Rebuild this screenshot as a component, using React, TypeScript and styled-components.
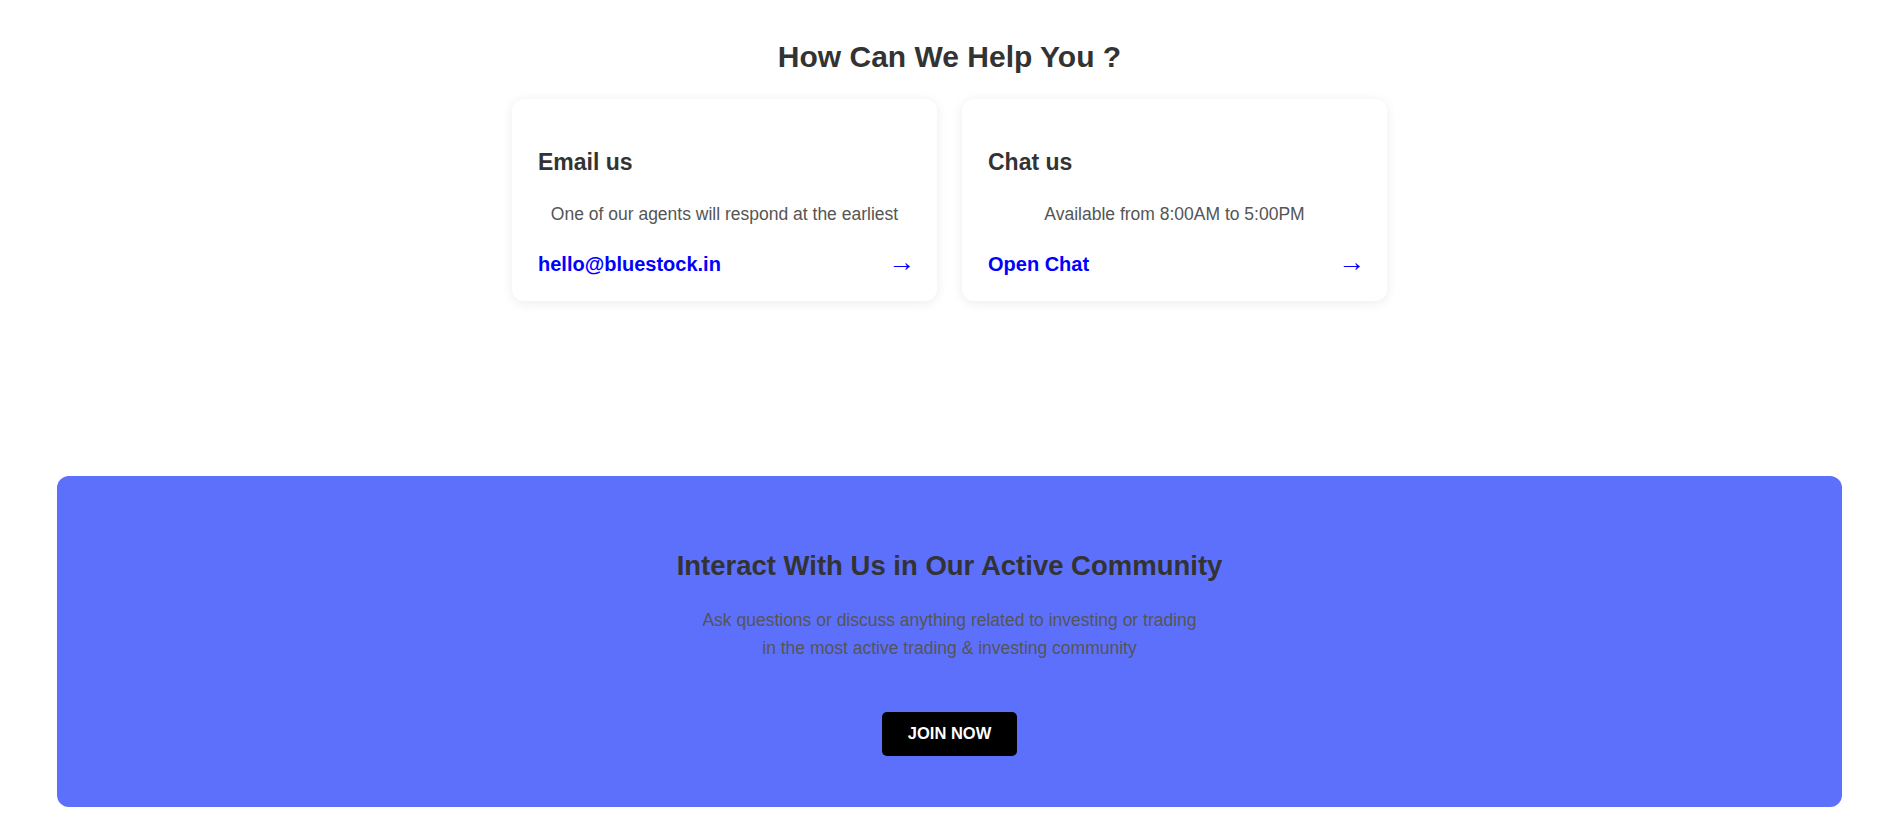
import React from "react";
import styled, { createGlobalStyle } from "styled-components";

const GlobalStyle = createGlobalStyle`
  * { box-sizing: border-box; }
  html, body {
    margin: 0;
    padding: 0;
    background: #ffffff;
    font-family: "Liberation Sans", Arial, sans-serif;
  }
`;

const Page = styled.div`
  display: flex;
  flex-direction: column;
  align-items: center;
  padding: 40px 52px 14px 57px;
`;

const HelpSection = styled.section`
  display: flex;
  flex-direction: column;
  align-items: center;
  width: 100%;
`;

const Heading = styled.h2`
  margin: 0;
  font-size: 30px;
  line-height: 34px;
  font-weight: 700;
  color: #333333;
`;

const CardRow = styled.div`
  display: flex;
  gap: 25px;
  margin-top: 25px;
`;

const Card = styled.div`
  width: 425px;
  height: 202px;
  background: #ffffff;
  border-radius: 12px;
  box-shadow: 0 2px 12px rgba(0, 0, 0, 0.08);
  padding: 50px 26px 0 26px;
  display: flex;
  flex-direction: column;
`;

const CardTitle = styled.h3`
  margin: 0;
  font-size: 23px;
  line-height: 26.5px;
  font-weight: 700;
  color: #333333;
`;

const CardText = styled.p`
  margin: 28.5px 0 0 0;
  font-size: 17.5px;
  line-height: 20px;
  color: #555555;
  text-align: center;
`;

const LinkRow = styled.div`
  margin-top: 29px;
  display: flex;
  align-items: center;
  justify-content: space-between;
  height: 23px;
`;

const CardLink = styled.a`
  font-size: 20px;
  line-height: 23px;
  font-weight: 700;
  color: #0000ff;
  text-decoration: none;
`;

const Arrow = styled.span`
  font-family: "Liberation Sans", Arial, sans-serif;
  font-size: 27px;
  line-height: 23px;
  height: 23px;
  display: flex;
  align-items: center;
  margin-top: -4px;
  margin-right: -4px;
  color: #0000ff;
`;

const Banner = styled.section`
  margin-top: 175px;
  width: 100%;
  height: 331px;
  background: #5c70fc;
  border-radius: 12px;
  display: flex;
  flex-direction: column;
  align-items: center;
  padding-top: 74px;
`;

const BannerTitle = styled.h2`
  margin: 0;
  font-size: 27.5px;
  line-height: 31.6px;
  font-weight: 700;
  color: #333333;
`;

const BannerText = styled.p`
  margin: 24px 0 0 0;
  font-size: 17.5px;
  line-height: 28px;
  color: #555555;
  text-align: center;
`;

const JoinButton = styled.button`
  margin-top: 50px;
  height: 44px;
  padding: 0 25.5px;
  border: none;
  border-radius: 5px;
  background: #000000;
  color: #ffffff;
  font-family: "Liberation Sans", Arial, sans-serif;
  font-size: 16.5px;
  font-weight: 700;
  cursor: pointer;
`;

type HelpCardProps = {
  title: string;
  text: string;
  link: string;
};

const HelpCard = ({ title, text, link }: HelpCardProps) => (
  <Card>
    <CardTitle>{title}</CardTitle>
    <CardText>{text}</CardText>
    <LinkRow>
      <CardLink href="#">{link}</CardLink>
      <Arrow>→</Arrow>
    </LinkRow>
  </Card>
);

export default function App() {
  return (
    <>
      <GlobalStyle />
      <Page>
        <HelpSection>
          <Heading>How Can We Help You ?</Heading>
          <CardRow>
            <HelpCard
              title="Email us"
              text="One of our agents will respond at the earliest"
              link="hello@bluestock.in"
            />
            <HelpCard
              title="Chat us"
              text="Available from 8:00AM to 5:00PM"
              link="Open Chat"
            />
          </CardRow>
        </HelpSection>
        <Banner>
          <BannerTitle>Interact With Us in Our Active Community</BannerTitle>
          <BannerText>
            Ask questions or discuss anything related to investing or trading
            <br />
            in the most active trading &amp; investing community
          </BannerText>
          <JoinButton>JOIN NOW</JoinButton>
        </Banner>
      </Page>
    </>
  );
}
